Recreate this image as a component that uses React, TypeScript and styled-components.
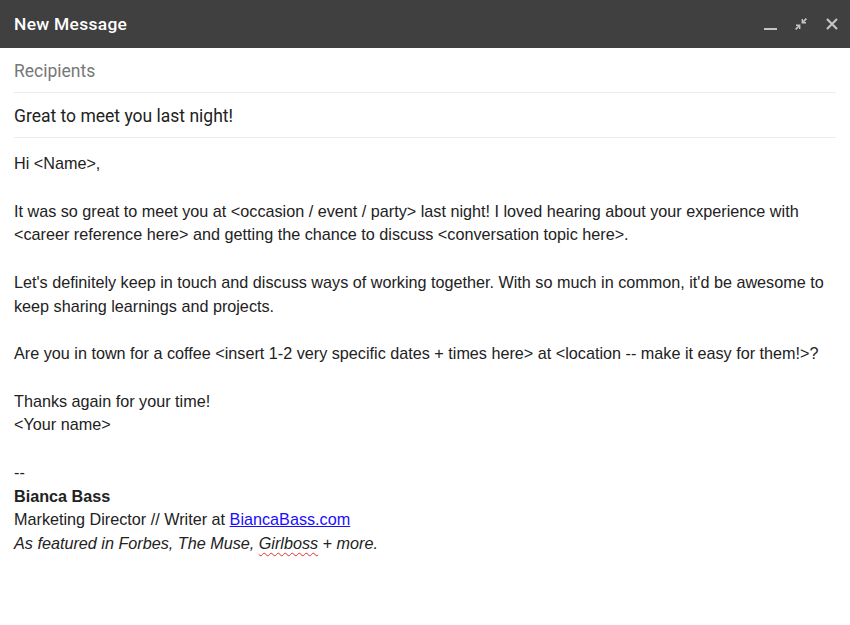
import styled, { createGlobalStyle } from 'styled-components';

const GlobalStyle = createGlobalStyle`
    html, body {
        margin: 0;
        padding: 0;
        background: #fff;
    }
`;

const Window = styled.div`
    width: 850px;
    height: 625px;
    background: #fff;
    display: flex;
    flex-direction: column;
`;

const TitleBar = styled.div`
    height: 48px;
    background: #404040;
    display: flex;
    align-items: center;
    padding: 0 10px 0 14px;
`;

const Title = styled.div`
    flex: 1;
    color: #fff;
    font-family: Roboto, 'Noto Sans', sans-serif;
    font-weight: 500;
    font-size: 17.4px;
    letter-spacing: 0.3px;
`;

const Controls = styled.div`
    display: flex;
    align-items: center;
    gap: 15px;
`;

const IconButton = styled.span`
    width: 16px;
    height: 16px;
    display: flex;
    align-items: center;
    justify-content: center;
    color: #c4c4c4;
`;

const Fields = styled.div`
    padding: 0 14px;
`;

const Field = styled.div<{ $muted?: boolean }>`
    height: 45px;
    border-bottom: 1px solid #ececec;
    display: flex;
    align-items: center;
    padding-top: 1px;
    box-sizing: border-box;
    font-family: Roboto, 'Noto Sans', sans-serif;
    font-size: 17.5px;
    color: ${p => p.$muted ? '#777' : '#222'};
`;

const Body = styled.div`
    padding: 14px 14px 0;
    font-family: 'Liberation Sans', Arial, sans-serif;
    font-size: 16.2px;
    line-height: 23.75px;
    color: #222;
`;

const Line = styled.div`
    min-height: 23.75px;
    white-space: nowrap;
`;

const Name = styled.div`
    font-weight: bold;
`;

const Link = styled.a`
    color: #1a0dff;
    text-decoration: underline;
`;

const Italic = styled.div`
    font-style: italic;
`;

const Misspelled = styled.span`
    text-decoration: underline wavy #e03030;
    text-decoration-thickness: 1px;
    text-underline-offset: 3px;
`;

export default function App() {
    return (
        <Window>
            <GlobalStyle />
            <TitleBar>
                <Title>New Message</Title>
                <Controls>
                    <IconButton>
                        <svg width="14" height="14" viewBox="0 0 14 14">
                            <rect x="1" y="11" width="13" height="2" fill="currentColor" />
                        </svg>
                    </IconButton>
                    <IconButton>
                        <svg width="14" height="14" viewBox="0 0 14 14" fill="currentColor">
                            <path d="M13 2.2 11.8 1 9 3.8V2H7.6v4.4H12V5h-1.8z" />
                            <path d="M1 11.8 2.2 13 5 10.2V12h1.4V7.6H2V9h1.8z" />
                        </svg>
                    </IconButton>
                    <IconButton>
                        <svg width="14" height="14" viewBox="0 0 14 14">
                            <path d="M2 2l10 10M12 2 2 12" stroke="currentColor" strokeWidth="2.2" />
                        </svg>
                    </IconButton>
                </Controls>
            </TitleBar>
            <Fields>
                <Field $muted>Recipients</Field>
                <Field>Great to meet you last night!</Field>
            </Fields>
            <Body>
                <Line>Hi &lt;Name&gt;,</Line>
                <Line />
                <Line>It was so great to meet you at &lt;occasion / event / party&gt; last night! I loved hearing about your experience with</Line>
                <Line>&lt;career reference here&gt; and getting the chance to discuss &lt;conversation topic here&gt;.</Line>
                <Line />
                <Line>Let's definitely keep in touch and discuss ways of working together. With so much in common, it'd be awesome to</Line>
                <Line>keep sharing learnings and projects.</Line>
                <Line />
                <Line>Are you in town for a coffee &lt;insert 1-2 very specific dates + times here&gt; at &lt;location -- make it easy for them!&gt;?</Line>
                <Line />
                <Line>Thanks again for your time!</Line>
                <Line>&lt;Your name&gt;</Line>
                <Line />
                <Line>--</Line>
                <Name>Bianca Bass</Name>
                <Line>Marketing Director // Writer at <Link href="#">BiancaBass.com</Link></Line>
                <Italic>As featured in Forbes, The Muse, <Misspelled>Girlboss</Misspelled> + more.</Italic>
            </Body>
        </Window>
    );
}
